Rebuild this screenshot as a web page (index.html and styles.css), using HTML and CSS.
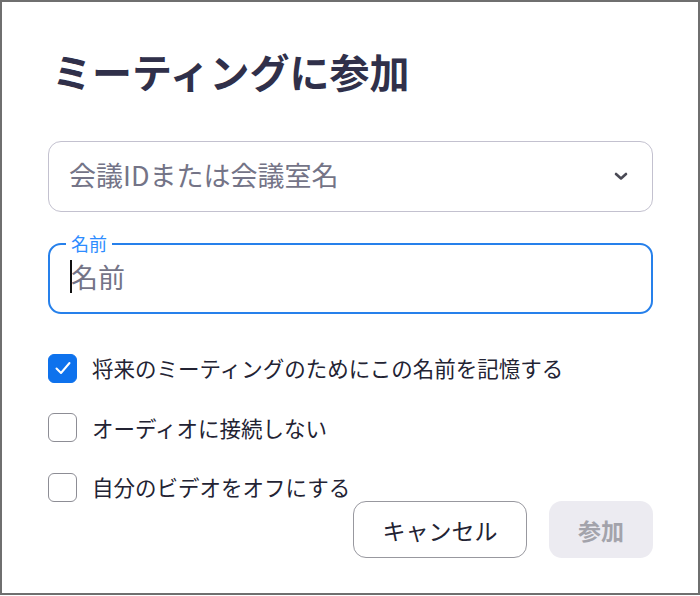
FILE: index.html
```html
<!DOCTYPE html>
<html lang="ja">
<head>
<meta charset="utf-8">
<title>ミーティングに参加</title>
<link rel="stylesheet" href="styles.css">
</head>
<body>
<div class="window">
  <h1 class="title">ミーティングに参加</h1>

  <div class="select">
    <span class="select-text">会議IDまたは会議室名</span>
    <svg class="chevron" width="14" height="9" viewBox="0 0 14 9"><path d="M2 2 L7 6.5 L12 2" fill="none" stroke="#4a4a55" stroke-width="2.6" stroke-linecap="round" stroke-linejoin="round"/></svg>
  </div>

  <div class="field">
    <span class="field-label">名前</span>
    <span class="caret"></span><span class="field-value">名前</span>
  </div>

  <div class="options">
    <label class="option">
      <span class="box checked">
        <svg width="18" height="14" viewBox="0 0 18 14"><path d="M2.5 7.5 L7 12 L15.5 2" fill="none" stroke="#fff" stroke-width="2" stroke-linecap="round" stroke-linejoin="round"/></svg>
      </span>
      <span class="option-text">将来のミーティングのためにこの名前を記憶する</span>
    </label>
    <label class="option">
      <span class="box"></span>
      <span class="option-text">オーディオに接続しない</span>
    </label>
    <label class="option">
      <span class="box"></span>
      <span class="option-text">自分のビデオをオフにする</span>
    </label>
  </div>

  <div class="actions">
    <button class="btn btn-cancel">キャンセル</button>
    <button class="btn btn-join">参加</button>
  </div>
</div>
</body>
</html>
```

FILE: styles.css
```css
* { box-sizing: border-box; }
html, body { margin: 0; padding: 0; background: #fff; }
body {
  font-family: "Noto Sans CJK JP", "Noto Sans", sans-serif;
}
.window {
  width: 700px;
  height: 595px;
  border: 2px solid #6f6f6f;
  padding: 45px 45px 0 46px;
  display: flex;
  flex-direction: column;
  background: #fff;
}
.title {
  margin: 0 0 0 4px;
  font-size: 40px;
  line-height: 48px;
  font-weight: 700;
  color: #30304a;
  letter-spacing: 0;
}
.select {
  margin-top: 46px;
  height: 71px;
  border: 1.5px solid #c3c1cf;
  border-radius: 13px;
  display: flex;
  align-items: center;
  justify-content: space-between;
  padding: 0 24px 5px 20px;
}
.select-text {
  font-size: 27px;
  color: #747487;
  line-height: 1;
}
.chevron { display: block; margin-top: 5px; }
.field {
  position: relative;
  margin-top: 31px;
  height: 71px;
  border: 2px solid #2680eb;
  border-radius: 13px;
  display: flex;
  align-items: center;
  padding: 0 0 4px 20px;
}
.field-label {
  position: absolute;
  top: -13px;
  left: 16px;
  padding: 0 5px;
  background: #fff;
  font-size: 18px;
  line-height: 22px;
  color: #2d8cff;
}
.caret {
  width: 2px;
  height: 33px;
  background: #111;
  margin-right: -1px;
}
.field-value {
  font-size: 27px;
  color: #747487;
  line-height: 1;
}
.options {
  margin-top: 39px;
  display: flex;
  flex-direction: column;
  gap: 29.5px;
}
.option {
  display: flex;
  align-items: center;
  height: 30px;
  gap: 15px;
}
.box {
  width: 29px;
  height: 29px;
  border: 1.5px solid #8d8d95;
  border-radius: 6px;
  display: flex;
  align-items: center;
  justify-content: center;
  flex: none;
}
.box.checked {
  background: #0e72ed;
  border-color: #0e72ed;
}
.option-text {
  font-size: 21.5px;
  color: #232333;
  line-height: 30px;
}
.actions {
  margin-top: -1px;
  display: flex;
  justify-content: flex-end;
  gap: 22px;
}
.btn {
  height: 57px;
  border-radius: 13px;
  font-family: inherit;
  font-size: 23px;
  padding: 0;
  cursor: pointer;
}
.btn-cancel {
  width: 174px;
  background: #fff;
  border: 1.5px solid #98989f;
  color: #232333;
}
.btn-join {
  width: 104px;
  background: #ecebf1;
  border: none;
  color: #a3a3ab;
  font-weight: 700;
}
```
